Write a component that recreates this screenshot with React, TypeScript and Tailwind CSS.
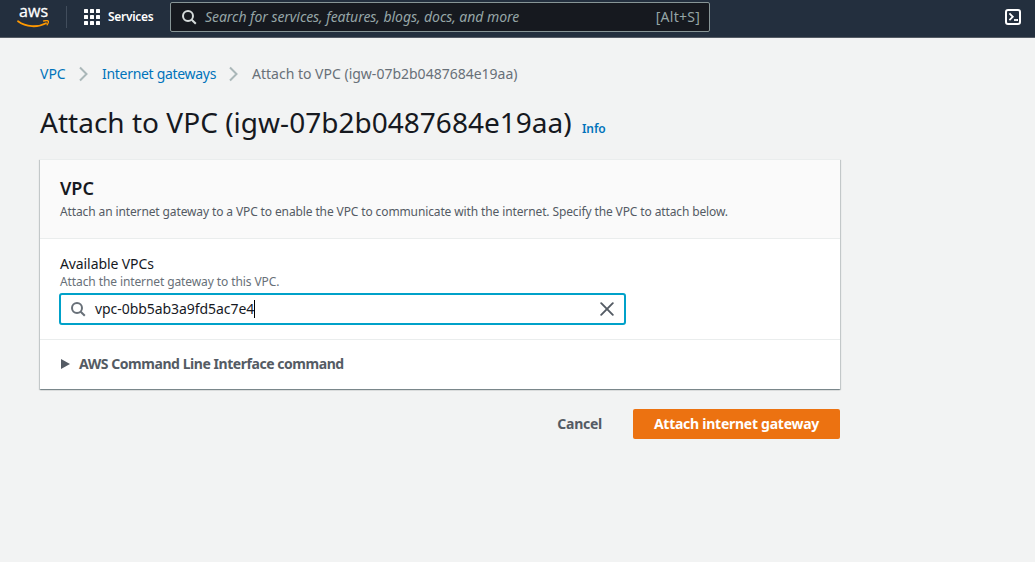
import React from "react";

function AwsLogo() {
  return (
    <div className="flex w-[33px] flex-col items-center">
      <span className="h-[14px] font-['Open_Sans',sans-serif] text-[16px] leading-[8px] tracking-[0.1px] text-white [-webkit-text-stroke:0.3px_#fff]">
        aws
      </span>
      <svg width="33" height="9" viewBox="0 0 33 9" fill="none" className="-mt-px block">
        <path d="M1 1.3C9 7.4 21 7.6 29 3.2" stroke="#ff9900" strokeWidth="1.8" strokeLinecap="round" />
        <path d="M26 1.1C28.2 0.5 30.6 0.5 31.2 1C31.8 1.6 31 4 29.7 5.3" stroke="#ff9900" strokeWidth="1.3" />
      </svg>
    </div>
  );
}

function GridIcon() {
  const cells = [0, 6, 12];
  return (
    <svg width="16" height="16" viewBox="0 0 16 16" fill="#fff" className="block shrink-0">
      {cells.map((y) => cells.map((x) => <rect key={`${x}-${y}`} x={x} y={y} width="4" height="4" rx="0.6" />))}
    </svg>
  );
}

function SearchIcon({ className }: { className: string }) {
  return (
    <svg width="16" height="16" viewBox="0 0 16 16" fill="none" stroke="currentColor" strokeWidth="2" className={className}>
      <circle cx="7" cy="7" r="5" />
      <path d="m10.7 10.7 4.1 4.1" />
    </svg>
  );
}

function Chevron() {
  return (
    <svg width="10" height="16" viewBox="0 0 10 16" fill="none" stroke="#aab7b8" strokeWidth="2" className="block shrink-0">
      <path d="m1 1.5 6.5 6.5L1 14.5" />
    </svg>
  );
}

function Header() {
  return (
    <header className="flex h-[38px] border-b border-[#545b64] bg-[#232f3e] pt-0.5">
      <div className="flex h-[30px] w-[66px] items-center pt-[2px] pl-[17px]">
        <AwsLogo />
      </div>
      <div className="mt-1 h-[22px] w-px bg-[#414d5c]" />
      <div className="flex h-[30px] w-[103px] items-center gap-2 pl-[17px]">
        <GridIcon />
        <span className="whitespace-nowrap text-[12px] font-semibold tracking-[-0.3px] text-white">Services</span>
      </div>
      <div className="flex h-[30px] w-[540px] items-center rounded-[2px] border border-[#879596] bg-[#16191f] pr-[9px] pl-[10px] text-[14px] text-[#95a5a6]">
        <SearchIcon className="mr-[8px] block shrink-0 text-[#d5dbdb]" />
        <span className="-mt-px whitespace-nowrap tracking-[-0.05px] italic">Search for services, features, blogs, docs, and more</span>
        <span className="-mt-px ml-auto whitespace-nowrap tracking-[0.25px]">[Alt+S]</span>
      </div>
      <svg width="16" height="16" viewBox="0 0 16 16" fill="none" stroke="#fff" className="mt-[7px] mr-[14px] ml-auto block">
        <rect x="1" y="1" width="14" height="14" rx="2" strokeWidth="2" />
        <path d="m4.4 4.4 3.4 3.4-3.4 3.4" strokeWidth="1.8" />
        <path d="M9 11h4" strokeWidth="1.8" />
      </svg>
    </header>
  );
}

export default function App() {
  return (
    <div className="h-[562px] w-[1035px] overflow-hidden bg-[#f2f3f3] font-['Noto_Sans','Open_Sans',sans-serif] text-[#16191f]">
      <Header />
      <main className="w-[841px] pt-[25px] pl-10">
        <nav className="flex h-[22px] items-center whitespace-nowrap text-[14px] leading-[22px]">
          <a className="w-[39px] text-[#0073bb]">VPC</a>
          <Chevron />
          <a className="ml-[13px] w-[127px] tracking-[-0.3px] text-[#0073bb]">Internet gateways</a>
          <Chevron />
          <span className="ml-[13px] text-[#687078]">Attach to VPC (igw-07b2b0487684e19aa)</span>
        </nav>
        <div className="mt-[19px] flex h-9 items-baseline whitespace-nowrap">
          <h1 className="w-[542px] text-[28px] leading-9 tracking-[0.02px]">Attach to VPC (igw-07b2b0487684e19aa)</h1>
          <a className="text-[12px] font-semibold tracking-[-0.1px] text-[#0073bb]">Info</a>
        </div>
        <section className="mt-[19px] h-[230px] w-[800px] bg-white shadow-[0_1px_1px_0_rgba(0,28,36,0.3),1px_1px_1px_0_rgba(0,28,36,0.15),-1px_1px_1px_0_rgba(0,28,36,0.15)]">
          <div className="h-[80px] border-t border-b border-[#eaeded] bg-[#fafafa] px-5 pt-[17px] whitespace-nowrap">
            <h2 className="text-[18px] leading-[22px] font-semibold">VPC</h2>
            <p className="mt-[5px] text-[12px] leading-4 tracking-[-0.12px] text-[#545b64]">
              Attach an internet gateway to a VPC to enable the VPC to communicate with the internet. Specify the VPC to attach below.
            </p>
          </div>
          <div className="h-[100px] px-5 pt-[14px] whitespace-nowrap">
            <label className="block text-[14px] leading-[22px] tracking-[-0.1px]">Available VPCs</label>
            <p className="text-[12px] leading-[14px] tracking-[-0.1px] text-[#687078]">Attach the internet gateway to this VPC.</p>
            <div className="mt-[4px] -ml-px flex h-8 w-[567px] items-center rounded-[3px] border-2 border-[#00a1c9] bg-white pr-[10px] pl-[9px]">
              <SearchIcon className="mr-[9px] block shrink-0 text-[#687078]" />
              <span className="text-[14px] leading-5 tracking-[-0.06px]">vpc-0bb5ab3a9fd5ac7e4</span>
              <span className="h-[18px] w-px bg-black" />
              <svg width="14" height="14" viewBox="0 0 14 14" fill="none" stroke="#545b64" strokeWidth="1.9" strokeLinecap="round" className="ml-auto block">
                <path d="m1.2 1.2 11.6 11.6M12.8 1.2 1.2 12.8" />
              </svg>
            </div>
          </div>
          <div className="flex h-[50px] items-center border-t border-[#eaeded] pl-[21px] text-[#545b64]">
            <svg width="9" height="10" viewBox="0 0 9 10" fill="currentColor" className="mt-[-2px] mr-[9px] block">
              <path d="M0 0 9 5 0 10Z" />
            </svg>
            <span className="-mt-[2px] whitespace-nowrap text-[14px] font-bold tracking-[-0.45px]">AWS Command Line Interface command</span>
          </div>
        </section>
        <div className="mt-5 flex h-[30px] w-[800px] items-center justify-end text-[14px] font-bold tracking-[-0.26px] whitespace-nowrap">
          <button className="mr-[31px] pb-[2px] text-[#545b64]">Cancel</button>
          <button className="h-[30px] w-[207px] rounded-[2px] bg-[#ec7211] pb-[2px] text-white">Attach internet gateway</button>
        </div>
      </main>
    </div>
  );
}
